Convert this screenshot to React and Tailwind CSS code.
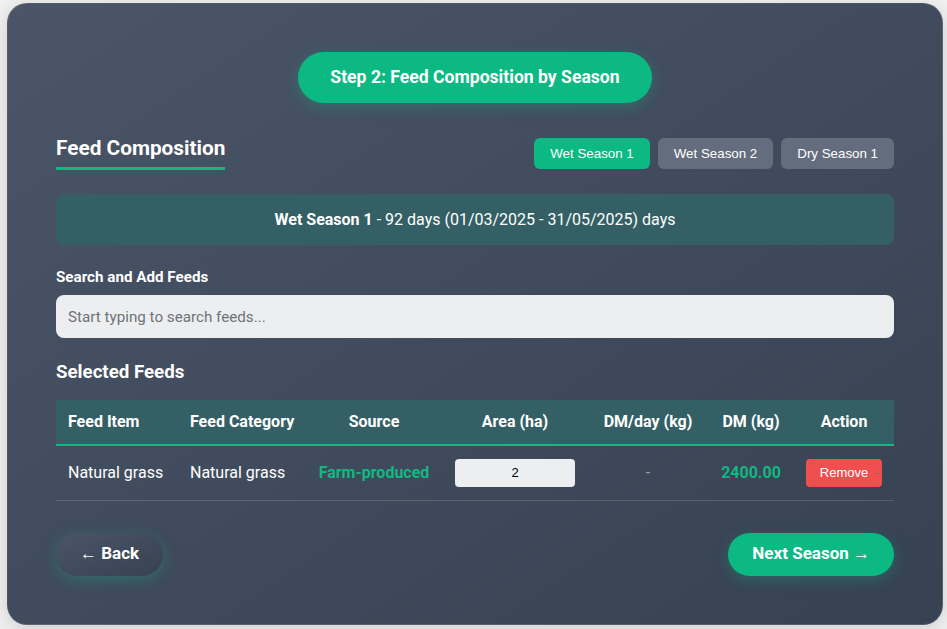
import React, { useState } from "react";

const seasons = ["Wet Season 1", "Wet Season 2", "Dry Season 1"];

const columns = [
  { label: "Feed Item", w: "w-[122px]", align: "text-left" },
  { label: "Feed Category", w: "w-[128px]", align: "text-left" },
  { label: "Source", w: "w-[136px]", align: "text-center" },
  { label: "Area (ha)", w: "w-[146px]", align: "text-center" },
  { label: "DM/day (kg)", w: "w-[120px]", align: "text-center" },
  { label: "DM (kg)", w: "w-[86px]", align: "text-center" },
  { label: "Action", w: "w-[100px]", align: "text-center" },
];

export default function App() {
  const [active, setActive] = useState(0);
  const [area, setArea] = useState("2");

  return (
    <div className="min-h-screen bg-[#f1f1f1] px-[7px] pt-[3px] font-['Roboto',sans-serif] text-white">
      <div className="w-[936px] h-[622px] rounded-[20px] border border-white/10 bg-gradient-to-br from-[#4a5568] to-[#364152] px-12 pt-12 shadow-[0_4px_20px_rgba(0,0,0,0.15)]">
        {/* Step pill */}
        <div className="flex justify-center">
          <div className="rounded-full bg-[#0cb982] px-8 h-[51px] flex items-center text-[17.6px] font-bold shadow-[0_4px_15px_rgba(16,185,129,0.3)]">
            Step 2: Feed Composition by Season
          </div>
        </div>

        {/* Heading and season tabs */}
        <div className="mt-[34px] flex items-start justify-between">
          <h2 className="text-[20.8px] font-bold leading-[22px] pb-[8px] border-b-[3px] border-[#10b981]">
            Feed Composition
          </h2>
          <div className="flex gap-2 pt-px">
            {seasons.map((s, i) => (
              <button
                key={s}
                onClick={() => setActive(i)}
                className={`h-[31px] px-4 rounded-[6px] text-[13.33px] font-['Liberation_Sans',Arial,sans-serif] ${
                  i === active ? "bg-[#0cb982] text-white" : "bg-[#646d7d] text-white"
                }`}
              >
                {s}
              </button>
            ))}
          </div>
        </div>

        {/* Season info */}
        <div className="mt-[24px] h-[51px] rounded-lg bg-[#345f64] flex items-center justify-center text-[16px]">
          <span>
            <span className="font-bold">Wet Season 1</span> - 92 days (01/03/2025 - 31/05/2025) days
          </span>
        </div>

        {/* Search */}
        <label className="block mt-[22px] text-[15.2px] font-bold leading-[20px]">Search and Add Feeds</label>
        <input
          type="text"
          placeholder="Start typing to search feeds..."
          className="mt-[8px] w-full h-[43px] rounded-lg bg-[#edeef0] px-3 text-[15.2px] text-gray-800 placeholder-[#6f7378] outline-none"
        />

        {/* Selected feeds */}
        <h3 className="mt-[20px] text-[18.7px] font-bold leading-[28px]">Selected Feeds</h3>
        <table className="mt-[14px] w-full table-fixed border-collapse">
          <thead>
            <tr className="bg-[#345f64] border-b-2 border-[#10b981]">
              {columns.map((c) => (
                <th key={c.label} className={`${c.w} ${c.align} h-[45px] px-3 text-[16px] font-bold whitespace-nowrap`}>
                  {c.label}
                </th>
              ))}
            </tr>
          </thead>
          <tbody>
            <tr className="border-b border-white/15">
              <td className="h-[55px] px-3 text-[16px] whitespace-nowrap">Natural grass</td>
              <td className="px-3 text-[16px] whitespace-nowrap">Natural grass</td>
              <td className="px-0 text-center text-[16px] font-bold text-[#10b981] whitespace-nowrap">Farm-produced</td>
              <td className="px-3 text-center">
                <input
                  value={area}
                  onChange={(e) => setArea(e.target.value)}
                  className="w-[120px] h-[28px] rounded-[4px] bg-[#edeef0] text-center text-[13px] text-black font-['Liberation_Sans',Arial,sans-serif] outline-none"
                />
              </td>
              <td className="text-center text-[16px] text-gray-400">-</td>
              <td className="text-center text-[16px] font-bold text-[#10b981]">2400.00</td>
              <td className="text-center">
                <button className="h-[28px] px-[14px] rounded-[4px] bg-[#ef4f4f] text-[13px] text-white font-['Liberation_Sans',Arial,sans-serif]">
                  Remove
                </button>
              </td>
            </tr>
          </tbody>
        </table>

        {/* Navigation */}
        <div className="mt-[32px] flex justify-between">
          <button className="h-[43px] px-6 rounded-full bg-gradient-to-br from-[#4a5568] to-[#364152] text-[17px] font-bold shadow-[0_4px_15px_rgba(16,185,129,0.3)]">
            ← Back
          </button>
          <button className="h-[43px] px-6 rounded-full bg-[#0cb982] text-[17px] font-bold shadow-[0_4px_15px_rgba(16,185,129,0.3)]">
            Next Season →
          </button>
        </div>
      </div>
    </div>
  );
}
